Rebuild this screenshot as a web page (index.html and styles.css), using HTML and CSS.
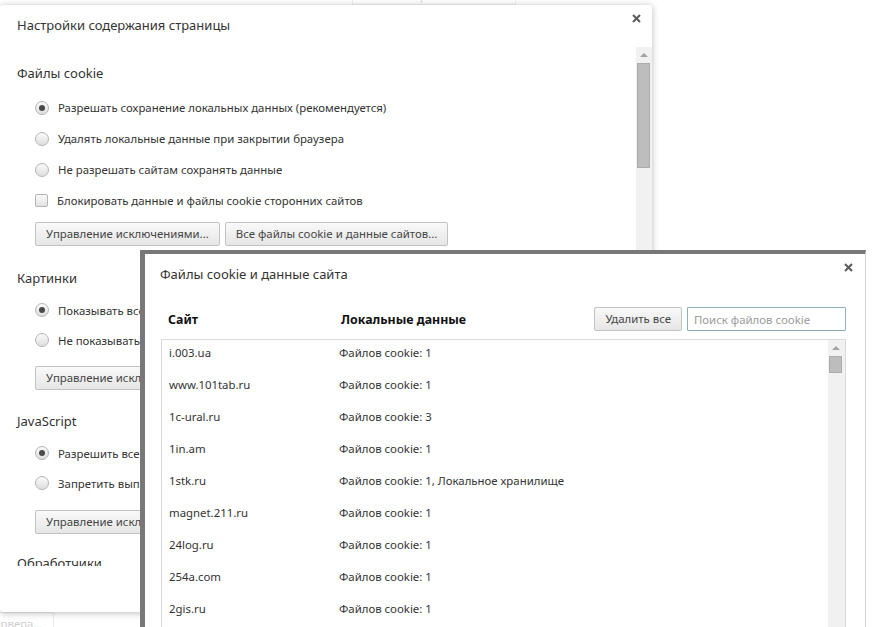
FILE: index.html
```html
<!DOCTYPE html>
<html lang="ru">
<head>
<meta charset="utf-8">
<title>Настройки содержания страницы</title>
<link rel="stylesheet" href="styles.css">
</head>
<body>
<div class="bg-search">Поиск настроек</div>
<div class="bg-btn">Сервера...</div>

<div class="dlg1">
  <div class="dlg1-head">Настройки содержания страницы</div>
  <button class="close close1" aria-label="Закрыть"><svg width="9" height="9" viewBox="0 0 9 9"><path d="M1 1L8 8M8 1L1 8" stroke="#5a5a5a" stroke-width="2"/></svg></button>
  <div class="dlg1-body">
    <div class="dlg1-content">
      <section class="sect sect-first">
        <h3 class="sect-title">Файлы cookie</h3>
        <label class="row"><span class="radio on"></span>Разрешать сохранение локальных данных (рекомендуется)</label>
        <label class="row"><span class="radio"></span>Удалять локальные данные при закрытии браузера</label>
        <label class="row"><span class="radio"></span>Не разрешать сайтам сохранять данные</label>
        <label class="row"><span class="check"></span>Блокировать данные и файлы cookie сторонних сайтов</label>
        <div class="btns"><button class="btn">Управление исключениями...</button><button class="btn">Все файлы cookie и данные сайтов...</button></div>
      </section>
      <section class="sect sect-small">
        <h3 class="sect-title">Картинки</h3>
        <label class="row"><span class="radio on"></span>Показывать все (рекомендуется)</label>
        <label class="row"><span class="radio"></span>Не показывать картинки</label>
        <div class="btns"><button class="btn">Управление исключениями...</button></div>
      </section>
      <section class="sect sect-small sect-js">
        <h3 class="sect-title">JavaScript</h3>
        <label class="row"><span class="radio on"></span>Разрешить всем сайтам использовать JavaScript</label>
        <label class="row"><span class="radio"></span>Запретить выполнение JavaScript на всех сайтах</label>
        <div class="btns"><button class="btn">Управление исключениями...</button></div>
      </section>
      <section class="sect">
        <h3 class="sect-title">Обработчики</h3>
      </section>
    </div>
    <div class="vscroll vscroll1">
      <div class="arrow-up"></div>
      <div class="thumb thumb1"></div>
    </div>
  </div>
</div>

<div class="dlg2">
  <div class="dlg2-head">Файлы cookie и данные сайта</div>
  <button class="close close2" aria-label="Закрыть"><svg width="9" height="9" viewBox="0 0 9 9"><path d="M1 1L8 8M8 1L1 8" stroke="#5a5a5a" stroke-width="2"/></svg></button>
  <div class="toolbar">
    <div class="col-h col-site">Сайт</div>
    <div class="col-h col-data">Локальные данные</div>
    <button class="btn btn-del">Удалить все</button>
    <input class="search" type="text" placeholder="Поиск файлов cookie">
  </div>
  <div class="list">
    <div class="list-rows">
      <div class="lrow"><span class="c-site">i.003.ua</span><span>Файлов cookie: 1</span></div>
      <div class="lrow"><span class="c-site">www.101tab.ru</span><span>Файлов cookie: 1</span></div>
      <div class="lrow"><span class="c-site">1c-ural.ru</span><span>Файлов cookie: 3</span></div>
      <div class="lrow"><span class="c-site">1in.am</span><span>Файлов cookie: 1</span></div>
      <div class="lrow"><span class="c-site">1stk.ru</span><span>Файлов cookie: 1, Локальное хранилище</span></div>
      <div class="lrow"><span class="c-site">magnet.211.ru</span><span>Файлов cookie: 1</span></div>
      <div class="lrow"><span class="c-site">24log.ru</span><span>Файлов cookie: 1</span></div>
      <div class="lrow"><span class="c-site">254a.com</span><span>Файлов cookie: 1</span></div>
      <div class="lrow"><span class="c-site">2gis.ru</span><span>Файлов cookie: 1</span></div>
    </div>
    <div class="vscroll vscroll2">
      <div class="arrow-up"></div>
      <div class="thumb thumb2"></div>
    </div>
  </div>
</div>
</body>
</html>
```
FILE: styles.css
```css
* { box-sizing: border-box; }
html, body { margin: 0; padding: 0; }
body {
  width: 878px;
  height: 627px;
  overflow: hidden;
  position: relative;
  background: #fff;
  font-family: "Noto Sans", "Open Sans", sans-serif;
  color: #333;
}
button { font-family: inherit; }

.bg-search {
  position: absolute;
  left: 352px;
  top: -13px;
  width: 164px;
  height: 18px;
  border: 1px solid #f0f0f0;
  color: #dcdcdc;
  font-size: 11.4px;
  line-height: 16px;
  padding-left: 6px;
}
.bg-btn {
  position: absolute;
  left: -22px;
  top: 612px;
  width: 76px;
  height: 24px;
  border: 1px solid #ececec;
  border-radius: 2px;
  color: #cfcfcf;
  font-size: 11.4px;
  line-height: 22px;
  padding-left: 8px;
}

/* first dialog */
.dlg1 {
  position: absolute;
  left: 0;
  top: 5px;
  width: 652px;
  height: 607px;
  background: #fff;
  border-radius: 3px;
  box-shadow: 0 1px 7px rgba(0, 0, 0, 0.28);
}
.dlg1-head {
  height: 42px;
  padding: 10px 17px;
  font-size: 13px;
  line-height: 20px;
  color: #333;
}
.close {
  position: absolute;
  border: 0;
  background: none;
  padding: 0;
  width: 9px;
  height: 9px;
  display: block;
}
.close svg { display: block; }
.close1 { right: 11px; top: 9px; }

.dlg1-body {
  display: flex;
  height: 519px;
}
.dlg1-content {
  flex: 1;
  overflow: hidden;
  padding: 16px 0 0 17px;
}
.sect { margin-bottom: 22px; }
.sect-title {
  margin: 0 0 9px;
  font-size: 13px;
  font-weight: normal;
  line-height: 20px;
  color: #333;
}
.row {
  display: flex;
  align-items: center;
  height: 31px;
  padding-left: 18px;
  font-size: 11.4px;
  color: #333;
  white-space: nowrap;
}
.sect-small { margin-bottom: 21px; }
.sect-small .sect-title { margin-bottom: 7px; }
.sect-small .row { height: 30px; }
.sect-small .btns { margin-top: 11px; }
.sect-js .btns { margin-top: 12px; }
.sect-js { margin-bottom: 19px; }

.radio {
  width: 14px;
  height: 14px;
  border-radius: 50%;
  border: 1px solid #b4b4b4;
  background: linear-gradient(#fafafa, #dedede);
  margin-right: 9px;
  position: relative;
  flex: none;
}
.radio.on::after {
  content: "";
  position: absolute;
  left: 3px;
  top: 3px;
  width: 6px;
  height: 6px;
  border-radius: 50%;
  background: #4a4a4a;
}
.check {
  width: 13px;
  height: 13px;
  border: 1px solid #b4b4b4;
  border-radius: 2px;
  background: linear-gradient(#fafafa, #e2e2e2);
  margin-right: 9px;
  flex: none;
}
.btns {
  display: flex;
  gap: 5px;
  margin-top: 6px;
  padding-left: 18px;
}
.btn {
  height: 24px;
  padding: 0 10px;
  border: 1px solid #c2c2c2;
  border-radius: 2px;
  background: linear-gradient(#f9f9f9, #e6e6e6);
  color: #444;
  font-size: 11.4px;
  line-height: 22px;
  white-space: nowrap;
}

.vscroll {
  width: 16px;
  background: #f1f1f1;
  position: relative;
  flex: none;
}
.arrow-up {
  position: absolute;
  left: 4px;
  top: 6px;
  width: 0;
  height: 0;
  border-left: 4px solid transparent;
  border-right: 4px solid transparent;
  border-bottom: 4px solid #a3a3a3;
}
.thumb {
  position: absolute;
  left: 1px;
  width: 13px;
  background: #bdbdbd;
  border: 1px solid #acacac;
}
.thumb1 { top: 16px; height: 105px; }

/* second dialog */
.dlg2 {
  position: absolute;
  left: 140px;
  top: 250px;
  width: 726px;
  height: 420px;
  background: #fff;
  border-left: 5px solid #787878;
  border-top: 4px solid #787878;
  border-right: 1px solid #cfcfcf;
}
.dlg2-head {
  padding: 10px 15px 0;
  font-size: 13px;
  line-height: 20px;
  color: #333;
}
.close2 { right: 12px; top: 9px; }
.toolbar {
  display: flex;
  align-items: center;
  height: 24px;
  margin: 23px 19px 0 16px;
}
.col-h {
  font-size: 12.4px;
  font-weight: bold;
  color: #111;
}
.col-site { width: 180px; padding-left: 7px; }
.col-data { flex: 1; padding-left: 0; }
.btn-del { padding: 0 10px; margin-right: 5px; }
.search {
  width: 159px;
  height: 24px;
  border: 1px solid #8eaebb;
  border-radius: 1px;
  padding: 0 6px;
  font-family: inherit;
  font-size: 11.4px;
  color: #333;
  outline: none;
}
.search::placeholder { color: #9a9a9a; }
.list {
  display: flex;
  margin: 8px 19px 0 16px;
  height: 320px;
  border: 1px solid #dadada;
}
.list-rows { flex: 1; overflow: hidden; }
.lrow {
  display: flex;
  height: 32px;
  line-height: 26px;
  padding-left: 7px;
  font-size: 11.4px;
  color: #333;
  white-space: nowrap;
}
.c-site { width: 170px; flex: none; }
.vscroll2 { width: 17px; }
.vscroll2 .arrow-up { left: 4px; top: 6px; }
.thumb2 { top: 16px; height: 17px; }
```
